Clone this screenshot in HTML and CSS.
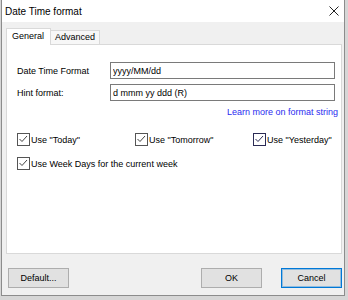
FILE: index.html
```html
<!DOCTYPE html>
<html lang="en">
<head>
    <meta charset="UTF-8">
    <meta name="viewport" content="width=device-width, initial-scale=1.0">
    <title>Date Time format</title>
    <link rel="stylesheet" href="styles.css">
</head>
<body>
    <div class="window">
        <div class="titlebar">
            <span class="title">Date Time format</span>
            <svg class="close" width="10" height="10" viewBox="0 0 10 10">
                <path d="M0.5 0.5 L9.5 9.5 M9.5 0.5 L0.5 9.5" stroke="#222" stroke-width="1" fill="none"/>
            </svg>
        </div>

        <div class="dlg-body">
            <div class="tabs">
                <div class="tab active">General</div>
                <div class="tab">Advanced</div>
            </div>

            <div class="panel">
                <div class="field">
                    <label for="fmt">Date Time Format</label>
                    <input id="fmt" type="text" value="yyyy/MM/dd">
                </div>
                <div class="field">
                    <label for="hint">Hint format:</label>
                    <input id="hint" type="text" value="d mmm yy ddd (R)">
                </div>
                <div class="link-row">
                    <a href="#" class="link">Learn more on format string</a>
                </div>

                <div class="checks">
                    <label class="check">
                        <span class="box"><svg width="11" height="11" viewBox="0 0 11 11"><polyline points="1.5,5 4,7.5 9,2" stroke="#444" stroke-width="1" fill="none"/></svg></span>
                        Use "Today"
                    </label>
                    <label class="check">
                        <span class="box"><svg width="11" height="11" viewBox="0 0 11 11"><polyline points="1.5,5 4,7.5 9,2" stroke="#444" stroke-width="1" fill="none"/></svg></span>
                        Use "Tomorrow"
                    </label>
                    <label class="check">
                        <span class="box focus"><svg width="11" height="11" viewBox="0 0 11 11"><polyline points="1.5,5 4,7.5 9,2" stroke="#2b2b55" stroke-width="1" fill="none"/></svg></span>
                        Use "Yesterday"
                    </label>
                </div>
                <div class="checks">
                    <label class="check wide">
                        <span class="box"><svg width="11" height="11" viewBox="0 0 11 11"><polyline points="1.5,5 4,7.5 9,2" stroke="#444" stroke-width="1" fill="none"/></svg></span>
                        Use Week Days for the current week
                    </label>
                </div>
            </div>

            <div class="footer">
                <button class="btn default-btn">Default...</button>
                <button class="btn ok-btn">OK</button>
                <button class="btn primary">Cancel</button>
            </div>
        </div>
    </div>
</body>
</html>
```

FILE: styles.css
```css
* {
    margin: 0;
    padding: 0;
    box-sizing: border-box;
    font-family: "Liberation Sans", Arial, sans-serif;
}

body {
    background: #d6d6d6;
    color: #000;
    font-size: 9px;
}

.window {
    margin-left: 1px;
    width: 344px;
    height: 296px;
    background: #f0f0f0;
    border: 1px solid #8c8c8c;
    border-top: none;
}

.titlebar {
    height: 22px;
    background: #fff;
    display: flex;
    align-items: center;
    justify-content: space-between;
    padding: 0 5px 0 3px;
}

.title {
    font-size: 10px;
}

.dlg-body {
    padding: 6px 2px 0 4px;
}

.tabs {
    display: flex;
    align-items: flex-end;
    height: 16px;
}

.tab {
    height: 14px;
    line-height: 13px;
    padding: 0 4px 0 4px;
    border: 1px solid #d9d9d9;
    border-bottom: none;
    background: #f7f7f7;
    margin-left: -1px;
}

.tab.active {
    position: relative;
    z-index: 1;
    height: 17px;
    line-height: 14px;
    margin-left: 0;
    margin-bottom: -1px;
    padding: 0 6px 0 5px;
    background: #fff;
}

.panel {
    height: 210px;
    background: #fff;
    border: 1px solid #d9d9d9;
    padding: 17px 6px 0 10px;
}

.field {
    display: grid;
    grid-template-columns: 93px 1fr;
    align-items: center;
    margin-bottom: 5px;
}

.field input {
    height: 17px;
    border: 1px solid #7a7a7a;
    padding: 0 2px;
    font-size: 9px;
    color: #000;
    background: #fff;
}

.link-row {
    display: flex;
    justify-content: flex-end;
    margin-right: -3px;
    line-height: 12px;
}

.link {
    color: #2b2bf0;
    text-decoration: none;
}

.checks {
    display: grid;
    grid-template-columns: 118px 118px 1fr;
    margin-top: 15px;
}

.checks + .checks {
    margin-top: 11px;
}

.check {
    display: flex;
    align-items: center;
    gap: 1px;
    height: 13px;
    white-space: nowrap;
}

.check.wide {
    grid-column: 1 / 4;
}

.box {
    width: 13px;
    height: 13px;
    border: 1px solid #555;
    background: #fff;
    display: flex;
    align-items: center;
    justify-content: center;
}

.box.focus {
    border-color: #2b2b55;
}

.footer {
    display: flex;
    margin-top: 14px;
}

.btn {
    width: 61px;
    height: 20px;
    background: #e1e1e1;
    border: 1px solid #adadad;
    font-size: 9px;
    color: #000;
}

.default-btn {
    margin-left: 2px;
}

.ok-btn {
    margin-left: auto;
    margin-right: 19px;
}

.btn.primary {
    border-color: #0078d7;
    box-shadow: inset 0 0 0 1px rgba(0, 120, 215, 0.35);
}
```
